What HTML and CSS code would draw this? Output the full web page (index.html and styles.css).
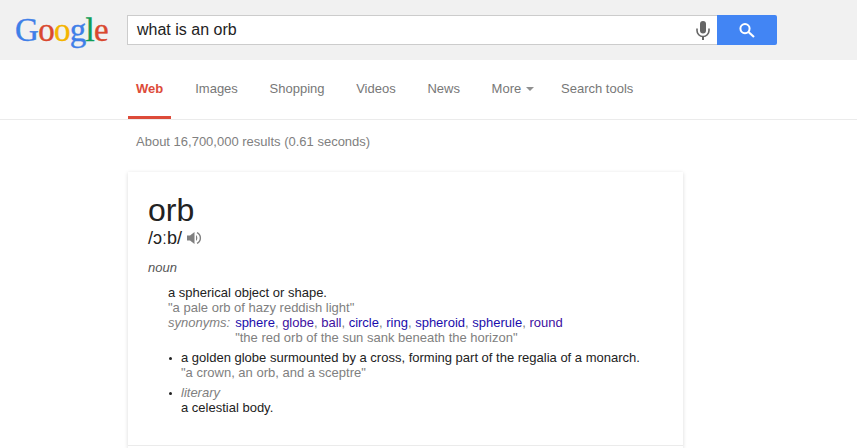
FILE: index.html
```html
<!DOCTYPE html>
<html lang="en">
<head>
    <meta charset="UTF-8">
    <title>what is an orb - Google Search</title>
    <link rel="stylesheet" href="styles.css">
</head>
<body>
    <div class="header">
        <div class="logo"><span class="blue">G</span><span class="red">o</span><span class="yellow">o</span><span class="blue">g</span><span class="green">l</span><span class="red">e</span></div>
        <div class="search-box">
            <span class="query">what is an orb</span>
            <svg class="mic" width="14" height="19" viewBox="0 0 14 19">
                <rect x="4" y="0" width="6" height="12.5" rx="3" fill="#666"/>
                <path d="M1 7.5v2a6 6 0 0 0 12 0v-2" fill="none" stroke="#666" stroke-width="1.6"/>
                <rect x="6" y="15" width="2" height="4" fill="#666"/>
            </svg>
        </div>
        <div class="search-button">
            <svg width="16" height="15" viewBox="0 0 16 15">
                <circle cx="6" cy="5.6" r="4.6" fill="none" stroke="#fff" stroke-width="2"/>
                <path d="M9.5 9L15 14" stroke="#fff" stroke-width="2.2"/>
            </svg>
        </div>
    </div>

    <div class="tabs">
        <a class="tab active">Web</a>
        <a class="tab">Images</a>
        <a class="tab">Shopping</a>
        <a class="tab">Videos</a>
        <a class="tab">News</a>
        <a class="tab more">More <span class="caret"></span></a>
        <a class="tab">Search tools</a>
    </div>

    <p class="stats">About 16,700,000 results (0.61 seconds)</p>

    <div class="card">
        <div class="word">orb</div>
        <div class="phonetic">/ɔːb/
            <svg class="speaker" width="16" height="16" viewBox="0 0 16 16">
                <path d="M1 5.5h3L8.5 2v12L4 10.5H1z" fill="#808080"/>
                <path d="M10 5a4 4 0 0 1 0 6z" fill="#808080"/>
                <path d="M11 2.6a6 6 0 0 1 0 10.8" fill="none" stroke="#808080" stroke-width="1.4"/>
            </svg>
        </div>
        <div class="pos">noun</div>

        <div class="sense first">
            <div>a spherical object or shape.</div>
            <div class="example">"a pale orb of hazy reddish light"</div>
            <div class="syn-row">
                <span class="syn-label">synonyms:</span>
                <div>
                    <div class="syn-list"><a>sphere</a>, <a class="visited">globe</a>, <a class="visited">ball</a>, <a>circle</a>, <a>ring</a>, <a>spheroid</a>, <a>spherule</a>, <a class="visited">round</a></div>
                    <div class="example">"the red orb of the sun sank beneath the horizon"</div>
                </div>
            </div>
        </div>

        <div class="sense bullet">
            <div>a golden globe surmounted by a cross, forming part of the regalia of a monarch.</div>
            <div class="example">"a crown, an orb, and a sceptre"</div>
        </div>

        <div class="sense bullet">
            <div class="register">literary</div>
            <div>a celestial body.</div>
        </div>

        <div class="card-foot"></div>
    </div>
</body>
</html>
```

FILE: styles.css
```css
html, body {
    height: 448px;
    overflow: hidden;
}
body {
    margin: 0;
    background-color: #fff;
    font-family: "Liberation Sans", Arial, sans-serif;
    color: #222;
}
.header {
    display: flex;
    align-items: center;
    height: 60px;
    background-color: #f1f1f1;
}
.logo {
    width: 127px;
    padding-left: 15px;
    box-sizing: border-box;
    font-family: "Liberation Serif", serif;
    font-size: 33px;
    letter-spacing: -0.7px;
    line-height: 60px;
    -webkit-text-stroke: 0.4px;
}
.blue { color: #3f7fe8; }
.red { color: #d9482f; }
.yellow { color: #f4b400; }
.green { color: #0f9d58; }
.search-box {
    display: flex;
    align-items: center;
    justify-content: space-between;
    box-sizing: border-box;
    width: 590px;
    height: 30px;
    padding: 0 7px 0 9px;
    background-color: #fff;
    border: 1px solid #ccc;
    border-right: none;
}
.query {
    font-size: 16px;
    color: #222;
}
.mic {
    margin-top: 1px;
}
.search-button {
    display: flex;
    align-items: center;
    justify-content: center;
    width: 60px;
    height: 30px;
    background-color: #4285f4;
    border-radius: 0 2px 2px 0;
}
.tabs {
    display: flex;
    box-sizing: border-box;
    height: 60px;
    padding-left: 128px;
    border-bottom: 1px solid #ebebeb;
    font-size: 13px;
    color: #777;
}
.tab {
    box-sizing: border-box;
    height: 59px;
    padding: 21px 8px 0;
    margin-right: 15.7px;
}
.tab.active {
    color: #dd4b39;
    font-weight: bold;
    border-bottom: 3px solid #dd4b39;
    margin-right: 16px;
}
.tab.more {
    margin-right: 11.2px;
}
.caret {
    display: inline-block;
    margin-left: 1px;
    vertical-align: 2px;
    border-top: 4px solid #909090;
    border-left: 4px solid transparent;
    border-right: 4px solid transparent;
}
.stats {
    margin: 0;
    padding: 14px 0 0 136px;
    font-size: 13px;
    line-height: 15px;
    color: #808080;
}
.card {
    box-sizing: border-box;
    width: 555px;
    height: 276px;
    margin: 23px 0 0 128px;
    padding-top: 20px;
    overflow: hidden;
    background-color: #fff;
    box-shadow: 0 1px 4px rgba(0, 0, 0, 0.15);
    font-size: 13px;
    line-height: 15px;
}
.word {
    padding-left: 20px;
    font-size: 32px;
    line-height: 36px;
    color: #222;
}
.phonetic {
    display: flex;
    align-items: center;
    gap: 4px;
    padding-left: 20px;
    font-size: 18px;
    line-height: 20px;
}
.pos {
    margin-top: 12px;
    padding-left: 20px;
    font-style: italic;
    color: #555;
}
.sense {
    margin-left: 40px;
}
.sense.first {
    margin-top: 10px;
}
.sense.bullet {
    position: relative;
    margin-top: 5px;
    padding-left: 13px;
}
.sense.bullet::before {
    content: "";
    position: absolute;
    left: 1px;
    top: 7px;
    width: 3px;
    height: 3px;
    border-radius: 50%;
    background-color: #222;
}
.example {
    color: #808080;
}
.syn-row {
    display: flex;
    gap: 5px;
}
.syn-label, .register {
    font-style: italic;
    color: #808080;
}
.syn-list {
    color: #808080;
}
.syn-list a {
    color: #1a0dab;
}
.syn-list a.visited {
    color: #40109f;
}
.card-foot {
    margin-top: 30px;
    border-top: 1px solid #ebebeb;
}
```
